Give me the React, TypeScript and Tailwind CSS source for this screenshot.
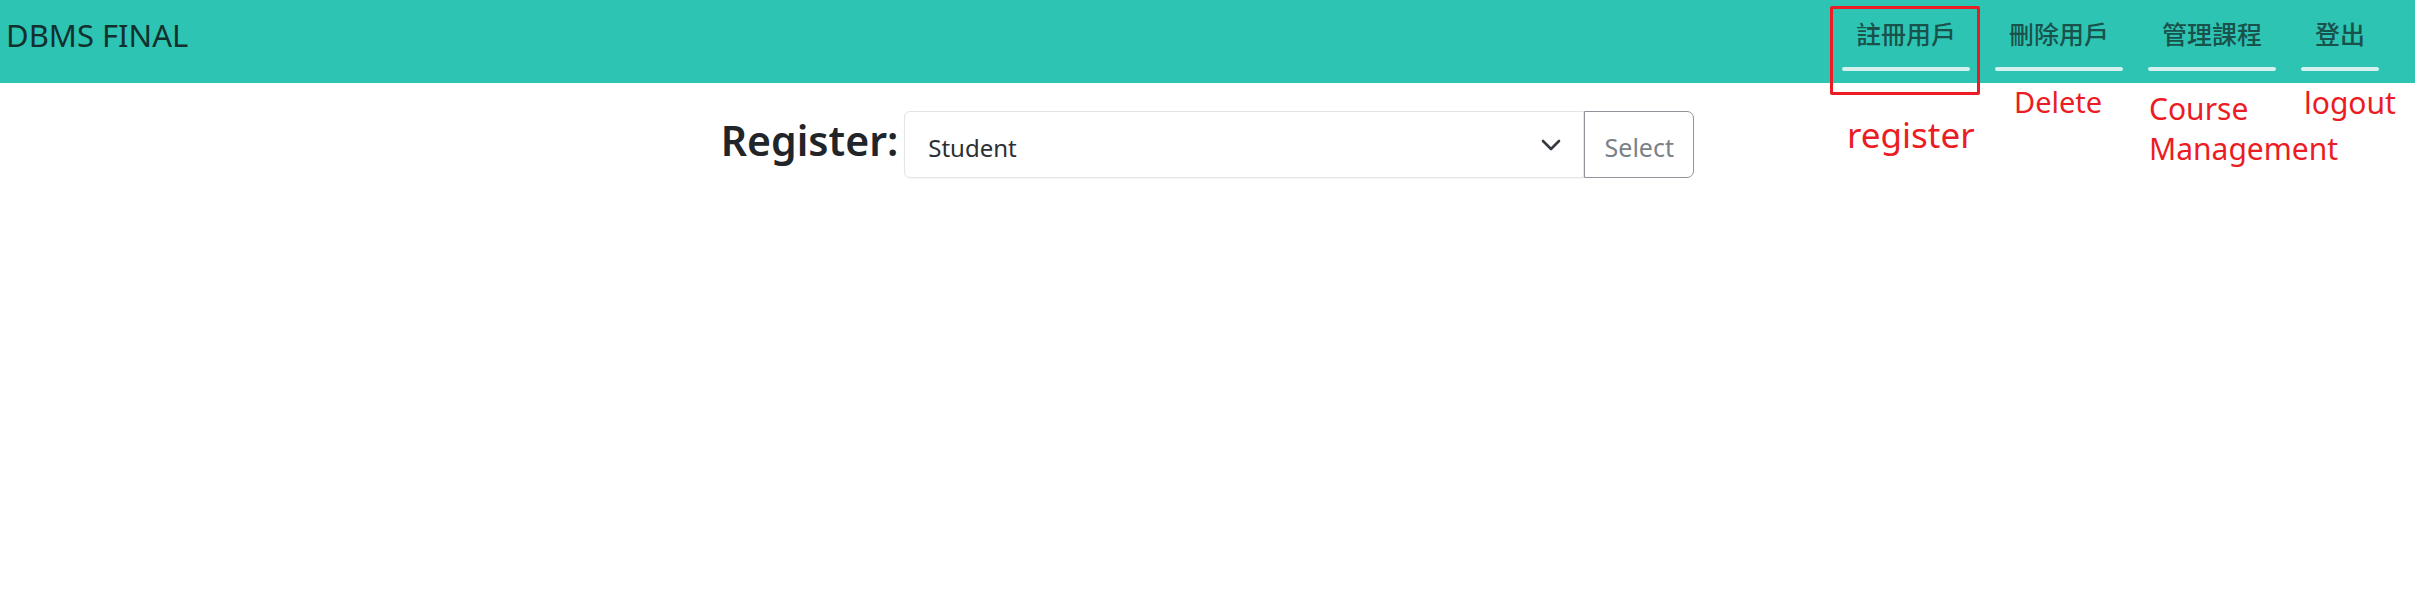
import React from 'react';

const links = ['註冊用戶', '刪除用戶', '管理課程', '登出'];

const Navbar: React.FC = () => {
  return (
    <div className="flex items-start justify-between h-[83px] bg-[#2ec4b3]">
      <div className="pl-[6px] pt-[20px] text-[31px] leading-none text-[#12302d]" style={{ fontFamily: '"Noto Sans", sans-serif' }}>
        DBMS FINAL
      </div>
      <div className="flex gap-[25px] pr-[36px] pt-[21px]">
        {links.map((l) => (
          <div key={l} className="flex flex-col">
            <span
              className="px-[14px] text-[25px] font-medium leading-none text-[#19524b]"
              style={{ fontFamily: '"Noto Sans CJK TC", sans-serif' }}
            >
              {l}
            </span>
            <div className="mt-[21px] h-[4px] w-full rounded-full bg-[#d6f2ee]"></div>
          </div>
        ))}
      </div>
    </div>
  );
};

const RegisterForm: React.FC = () => {
  return (
    <div className="mt-[28px] flex justify-center items-start" style={{ fontFamily: '"Noto Sans", sans-serif' }}>
      <div className="mt-[9px] mr-[6px] text-[41px] font-semibold leading-none text-[#212529]">Register:</div>
      <div className="flex h-[67px] w-[680px] items-center justify-between rounded-l-[6px] border border-[#e2e4e7] bg-white pl-[23px] pr-[22px] shadow-[0_1px_2px_rgba(0,0,0,0.04)]">
        <span className="pt-[6px] text-[24px] leading-none text-[#2b2f33]">Student</span>
        <svg width="20" height="12" viewBox="0 0 20 12" className="mt-[1px]">
          <polyline points="2,2 10,10 18,2" fill="none" stroke="#343a40" strokeWidth="2.6" strokeLinecap="round" strokeLinejoin="round" />
        </svg>
      </div>
      <button className="flex h-[67px] w-[110px] items-center justify-center rounded-r-[7px] border border-[#8e9499] bg-white">
        <span className="pt-[6px] text-[25px] leading-none text-[#7a8187]">Select</span>
      </button>
    </div>
  );
};

const Annotations: React.FC = () => {
  return (
    <div className="text-[#ec1c24]" style={{ fontFamily: '"Noto Sans", sans-serif' }}>
      <div className="absolute left-[1830px] top-[6px] h-[89px] w-[150px] rounded-[2px] border-[3px] border-[#ec1c24]"></div>
      <div className="absolute left-[1847px] top-[117px] text-[35px] leading-none">register</div>
      <div className="absolute left-[2014px] top-[87px] text-[29px] leading-none">Delete</div>
      <div className="absolute left-[2149px] top-[89px] text-[30px] leading-[40px]">
        Course
        <br />
        Management
      </div>
      <div className="absolute left-[2304px] top-[88px] text-[30px] leading-none">logout</div>
    </div>
  );
};

const App: React.FC = () => {
  return (
    <div className="relative h-[609px] w-full overflow-hidden bg-white">
      <Navbar />
      <RegisterForm />
      <Annotations />
    </div>
  );
};

export default App;
